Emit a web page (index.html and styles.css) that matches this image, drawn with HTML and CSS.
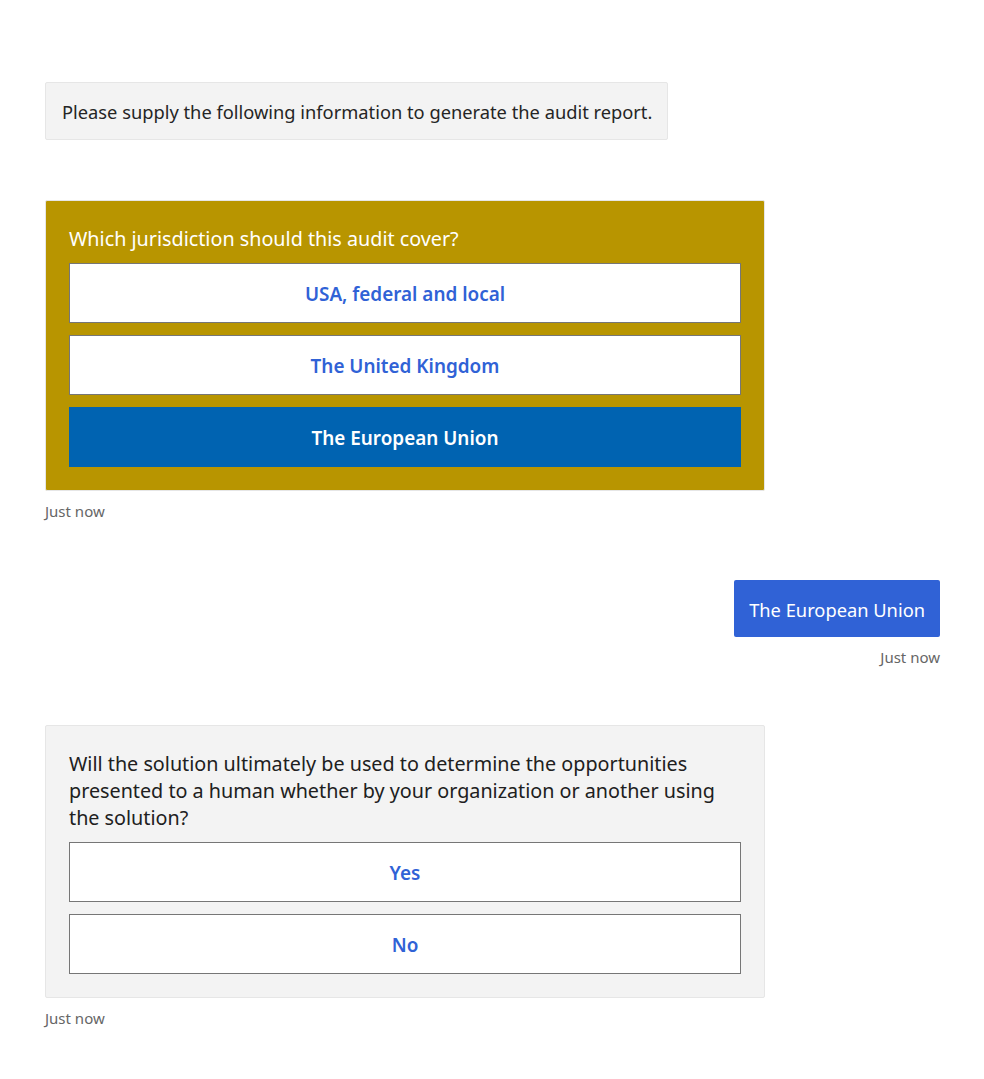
FILE: index.html
```html
<!DOCTYPE html>
<html>
<head>
<meta charset="utf-8">
<link rel="stylesheet" href="styles.css">
</head>
<body>
<div class="chat">
  <div class="row row-bot">
    <div class="bubble bubble-info">Please supply the following information to generate the audit report.</div>
  </div>

  <div class="row row-bot gap">
    <div class="card card-gold">
      <div class="card-title">Which jurisdiction should this audit cover?</div>
      <div class="actions">
        <button class="choice">USA, federal and local</button>
        <button class="choice">The United Kingdom</button>
        <button class="choice choice-selected">The European Union</button>
      </div>
    </div>
    <div class="stamp">Just now</div>
  </div>

  <div class="row row-user gap">
    <div class="bubble bubble-user">The European Union</div>
    <div class="stamp">Just now</div>
  </div>

  <div class="row row-bot gap-s">
    <div class="card card-gray">
      <div class="card-text">Will the solution ultimately be used to determine the opportunities presented to a human whether by your organization or another using the solution?</div>
      <div class="actions">
        <button class="choice">Yes</button>
        <button class="choice">No</button>
      </div>
    </div>
    <div class="stamp">Just now</div>
  </div>
</div>
</body>
</html>
```

FILE: styles.css
```css
html, body {
  margin: 0;
  padding: 0;
  background: #ffffff;
}

body {
  font-family: "Noto Sans", "Open Sans", "Liberation Sans", sans-serif;
  color: #242424;
}

.chat {
  display: flex;
  flex-direction: column;
  padding: 82px 44px 40px 45px;
}

.row {
  display: flex;
  flex-direction: column;
}

.row-bot {
  align-items: flex-start;
}

.row-user {
  align-items: flex-end;
}

.gap {
  margin-top: 60px;
}

.gap-s {
  margin-top: 59px;
}

.bubble {
  box-sizing: border-box;
  border-radius: 2px;
}

.bubble-info {
  background: #f3f3f3;
  border: 1px solid #e6e6e6;
  height: 58px;
  padding: 1px 15px 0 16px;
  display: flex;
  align-items: center;
  font-size: 18.3px;
  color: #252525;
}

.bubble-user {
  background: #3062d6;
  color: #ffffff;
  height: 57px;
  padding: 1px 15px 0 15px;
  display: flex;
  align-items: center;
  font-size: 18.3px;
}

.card {
  box-sizing: border-box;
  width: 720px;
  border-radius: 2px;
  padding: 24px 23px 23px 23px;
}

.card-gold {
  background: #b89500;
  border: 1px solid #e6e6e6;
}

.card-gray {
  background: #f3f3f3;
  border: 1px solid #e6e6e6;
}

.card-title {
  color: #ffffff;
  font-size: 19.75px;
  line-height: 27px;
  margin-bottom: 11px;
}

.card-text {
  color: #202020;
  font-size: 19.75px;
  line-height: 27px;
  margin-bottom: 11px;
}

.actions {
  display: flex;
  flex-direction: column;
  gap: 12px;
}

.choice {
  box-sizing: border-box;
  height: 60px;
  width: 100%;
  background: #ffffff;
  border: 1px solid #767676;
  border-radius: 0;
  color: #3062d6;
  font-family: inherit;
  font-size: 18.9px;
  font-weight: 600;
  padding: 2px 0 0 0;
  cursor: pointer;
}

.choice-selected {
  background: #0063b1;
  border-color: #0063b1;
  color: #ffffff;
}

.stamp {
  font-size: 15px;
  color: #666666;
  margin-top: 11px;
  line-height: 18px;
}
```
